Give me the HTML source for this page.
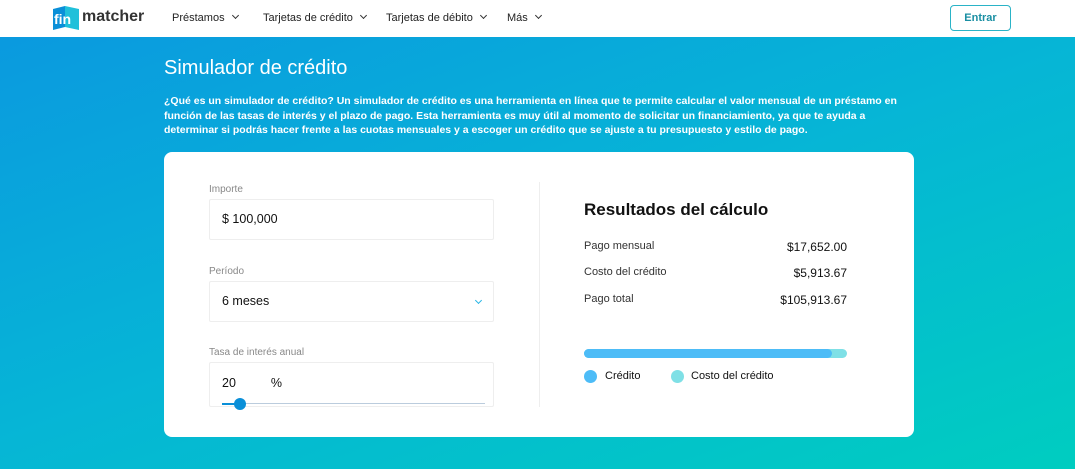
<!DOCTYPE html>
<html><head><meta charset="utf-8"><style>
*{box-sizing:border-box;margin:0;padding:0}
body{width:1075px;height:469px;overflow:hidden;font-family:"Liberation Sans",sans-serif;background:linear-gradient(160deg,#0b97e0 0%,#06b5d6 50%,#00cdc0 100%);position:relative}
.nav{position:absolute;top:0;left:0;width:1075px;height:37px;background:#fff}
.nav .m{position:absolute;top:12px;font-size:11px;color:#222}
.chev{display:inline-block;width:5px;height:5px;border-right:1px solid #333;border-bottom:1px solid #333;transform:rotate(45deg);margin-left:8px;position:relative;top:-3px}
.btn{position:absolute;left:950px;top:5px;width:61px;height:26px;border:1px solid #2ab3c7;border-radius:4px;color:#1a8fa3;font-size:11px;font-weight:bold;text-align:center;line-height:24px}
h1{position:absolute;left:164px;top:57px;font-weight:normal;font-size:20px;color:#fff}
.intro{position:absolute;left:164px;top:94px;width:750px;font-size:10.5px;letter-spacing:0;font-weight:bold;color:#fff;line-height:14.5px}
.card{position:absolute;left:164px;top:152px;width:750px;height:285px;background:#fff;border-radius:8px}
.lbl{position:absolute;font-size:10px;color:#888}
.inp{position:absolute;left:45px;width:285px;height:41px;border:1px solid #eee;border-radius:2px;font-size:12.5px;color:#111;padding-left:12px;line-height:39px}
.div{position:absolute;left:375px;top:30px;width:1px;height:225px;background:#eee}
.r{position:absolute;left:420px;width:263px;font-size:11px;color:#333}
.r b{position:absolute;right:0;font-weight:normal;color:#111;font-size:12px}
</style></head><body>
<div class="nav">
<svg style="position:absolute;left:52px;top:5px" width="28" height="26"><path d="M1 4 L13 1 L13 22 L1 25Z" fill="#0a8fd8"/><path d="M13 1 L27 4 L27 25 L13 22Z" fill="#20c0da"/><text x="2" y="19" font-size="14" font-weight="bold" fill="#fff" font-family="Liberation Sans">fin</text></svg>
<div style="position:absolute;left:82px;top:8px;font-size:16px;font-weight:bold;color:#333">matcher</div>
<div class="m" style="left:172px">Préstamos<span class="chev"></span></div>
<div class="m" style="left:263px">Tarjetas de crédito<span class="chev"></span></div>
<div class="m" style="left:386px">Tarjetas de débito<span class="chev"></span></div>
<div class="m" style="left:507px">Más<span class="chev"></span></div>
<div class="btn">Entrar</div>
</div>
<h1>Simulador de crédito</h1>
<div class="intro">¿Qué es un simulador de crédito? Un simulador de crédito es una herramienta en línea que te permite calcular el valor mensual de un préstamo en función de las tasas de interés y el plazo de pago. Esta herramienta es muy útil al momento de solicitar un financiamiento, ya que te ayuda a determinar si podrás hacer frente a las cuotas mensuales y a escoger un crédito que se ajuste a tu presupuesto y estilo de pago.</div>
<div class="card">
<div class="lbl" style="left:45px;top:32px">Importe</div>
<div class="inp" style="top:47px">$ 100,000</div>
<div class="lbl" style="left:45px;top:114px">Período</div>
<div class="inp" style="top:129px">6 meses<span style="position:absolute;right:12px;top:16px;width:5px;height:5px;border-right:1px solid #29b6e6;border-bottom:1px solid #29b6e6;transform:rotate(45deg)"></span></div>
<div class="lbl" style="left:45px;top:195px">Tasa de interés anual</div>
<div class="inp" style="top:210px;height:45px;line-height:20px;padding-top:10px">20<span style="margin-left:35px">%</span>
<div style="position:absolute;left:12px;top:40px;width:263px;height:1px;background:#bcd"></div>
<div style="position:absolute;left:12px;top:40px;width:18px;height:2px;background:#0a8fd8"></div>
<div style="position:absolute;left:24px;top:35px;width:12px;height:12px;border-radius:50%;background:#0a8fd8"></div>
</div>
<div class="div"></div>
<div class="r" style="top:48px;font-size:17px;font-weight:bold;color:#111">Resultados del cálculo</div>
<div class="r" style="top:88px">Pago mensual<b>$17,652.00</b></div>
<div class="r" style="top:114px">Costo del crédito<b>$5,913.67</b></div>
<div class="r" style="top:141px">Pago total<b>$105,913.67</b></div>
<div style="position:absolute;left:420px;top:197px;width:263px;height:9px;border-radius:5px;background:#7fe0e6"><div style="width:248px;height:9px;border-radius:5px;background:#4dbcf7"></div></div>
<div style="position:absolute;left:420px;top:218px;width:13px;height:13px;border-radius:50%;background:#4dbcf7"></div>
<div class="r" style="left:441px;top:218px;color:#111">Crédito</div>
<div style="position:absolute;left:507px;top:218px;width:13px;height:13px;border-radius:50%;background:#7fe0e6"></div>
<div class="r" style="left:527px;top:218px;color:#111">Costo del crédito</div>
</div>
</body></html>
